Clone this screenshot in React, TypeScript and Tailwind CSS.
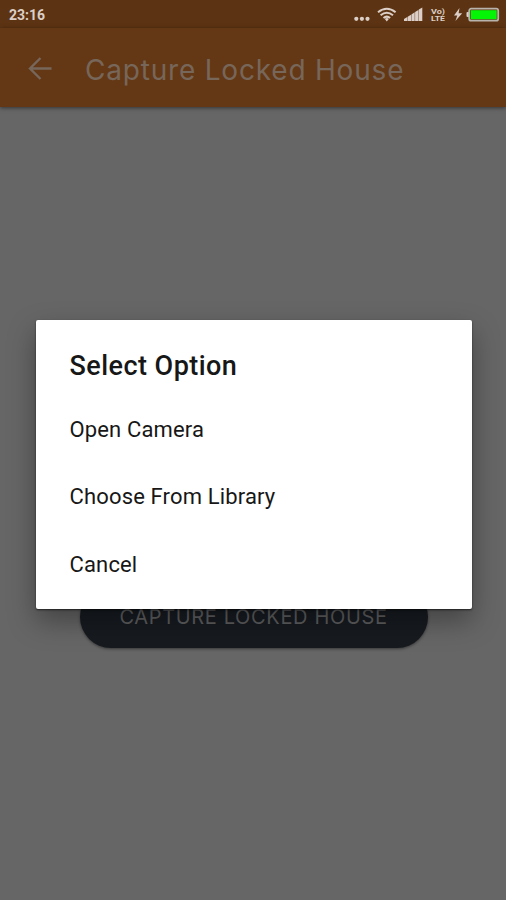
const options = ['Open Camera', 'Choose From Library', 'Cancel'];

function StatusBar() {
  return (
    <div className="flex h-7 items-center justify-between bg-[#5d3413] pl-[9px] pr-[6px] text-[#dccfc7]">
      <span className="mt-[2px] font-[Roboto] text-[14px] font-bold leading-none">23:16</span>
      <svg width="150" height="28" viewBox="0 0 150 28" fill="none">
        {/* Notification dots */}
        <g fill="#dccfc7">
          <circle cx="6.3" cy="18.8" r="2.1" />
          <circle cx="11.9" cy="18.8" r="2.1" />
          <circle cx="17.5" cy="18.8" r="2.1" />
        </g>
        {/* Wifi */}
        <g stroke="#dccfc7" strokeWidth="2">
          <path d="M28 12.2Q36.8 5.2 45.6 12.2" />
          <path d="M30.6 15.2Q36.8 10.2 43 15.2" />
          <path d="M33.5 18Q36.8 15.2 40.1 18" />
        </g>
        <path d="M34.8 19Q36.8 17.2 38.8 19L36.8 21.4Z" fill="#dccfc7" />
        {/* Signal */}
        <path
          d="M54 19L57.3 17V21H54ZM57.7 16.7L61 14.7V21H57.7ZM61.4 14.4L64.7 12.3V21H61.4ZM65.1 12L68.4 9.9V21H65.1ZM68.8 9.6L72.3 7.6V21H68.8Z"
          fill="#dccfc7"
        />
        <g fill="#dccfc7" fontFamily="Roboto, sans-serif" fontWeight="700" fontSize="7.4">
          <text x="81" y="13.6" textLength="14" lengthAdjust="spacingAndGlyphs">Vo)</text>
          <text x="81" y="21.4" textLength="14" lengthAdjust="spacingAndGlyphs">LTE</text>
        </g>
        {/* Charging battery */}
        <path d="M109.5 8L104 15.5H107.3L105.4 21L112.2 13.3H108.6Z" fill="#dccfc7" />
        <rect x="116.5" y="12" width="3" height="5" rx="1" fill="#dccfc7" />
        <rect x="119.2" y="8.7" width="29" height="12" rx="2" stroke="#b9b3ae" strokeWidth="1.8" />
        <rect x="120.7" y="10.2" width="26" height="9" fill="#04f506" />
      </svg>
    </div>
  );
}

function AppBar() {
  return (
    <header className="relative flex h-[79px] items-center bg-[#643815] pl-[28px] text-[#77665a] shadow-[0_1px_4px_rgba(0,0,0,0.5)]">
      <svg width="24" height="24" viewBox="0 0 24 24" fill="none" stroke="currentColor" strokeWidth="2.4">
        <path d="M23.5 12.5H2M12.5 2L2 12.5L12.5 23" />
      </svg>
      <h1 className="ml-[33px] mt-[4px] whitespace-nowrap font-[Inter] text-[28px] font-normal leading-none tracking-[0.8px]">
        Capture Locked House
      </h1>
    </header>
  );
}

export default function App() {
  return (
    <div className="relative flex h-[900px] w-full flex-col overflow-hidden bg-[#666666]">
      <StatusBar />
      <AppBar />
      <main className="flex flex-1 flex-col items-center pt-[479px]">
        <button className="ml-px h-[62px] w-[348px] rounded-[31px] bg-[#171b20] font-[Inter] text-[20px] font-normal tracking-[0.65px] text-[#5f5f60] shadow-[0_1px_3px_rgba(0,0,0,0.45)]">
          CAPTURE LOCKED HOUSE
        </button>
      </main>

      {/* Option dialog */}
      <div role="dialog" className="absolute left-[35.5px] top-[320px] flex h-[288.5px] w-[436px] flex-col rounded-[2px] bg-white px-[34px] pt-[29px] font-[Roboto] text-[#171717] shadow-[0_1px_2px_rgba(0,0,0,0.6),0_12px_28px_rgba(0,0,0,0.35)]">
        <h2 className="text-[27px] font-medium leading-[34px] tracking-[0.45px]">Select Option</h2>
        <ul className="mt-[12.5px]">
          {options.map((option) => (
            <li key={option} className="flex h-[67.5px] items-center text-[22px] tracking-[0.15px]">
              {option}
            </li>
          ))}
        </ul>
      </div>
    </div>
  );
}
